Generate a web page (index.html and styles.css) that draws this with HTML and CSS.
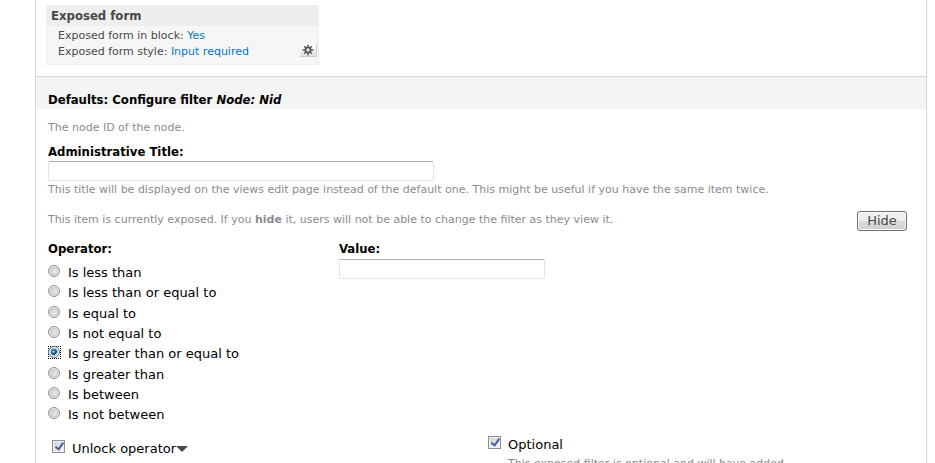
FILE: index.html
```html
<!DOCTYPE html>
<html lang="en">
<head>
    <meta charset="UTF-8">
    <meta name="viewport" content="width=device-width, initial-scale=1.0">
    <title>Configure filter</title>
    <link rel="stylesheet" href="styles.css">
</head>
<body>
    <div class="views-edit">
        <!-- Exposed form settings -->
        <div class="bucket">
            <h3 class="bucket-title">Exposed form</h3>
            <div class="bucket-body">
                <div class="setting">
                    <span>Exposed form in block: <a href="#">Yes</a></span>
                </div>
                <div class="setting">
                    <span>Exposed form style: <a href="#">Input required</a></span>
                    <button type="button" class="gear" aria-label="Settings">
                        <svg width="12" height="12" viewBox="0 0 12 12">
                            <g stroke="#555">
                                <path d="M6 0.5V11.5M0.5 6H11.5M2.2 2.2L9.8 9.8M9.8 2.2L2.2 9.8" stroke-width="1.4" />
                                <circle cx="6" cy="6" r="2.6" fill="#e8e8e8" stroke-width="1.8" />
                            </g>
                        </svg>
                    </button>
                </div>
            </div>
        </div>

        <!-- Filter form -->
        <form class="filter-form">
            <h2 class="form-title">Defaults: Configure filter <em>Node: Nid</em></h2>
            <div class="form-body">
                <p class="note">The node ID of the node.</p>

                <div class="form-item">
                    <label class="label" for="admin-title">Administrative Title:</label>
                    <input type="text" id="admin-title" class="text-box title-box">
                    <p class="description">This title will be displayed on the views edit page instead of the default one. This might be useful if you have the same item twice.</p>
                </div>

                <div class="exposed">
                    <p class="note">This item is currently exposed. If you <strong>hide</strong> it, users will not be able to change the filter as they view it.</p>
                    <button type="button" class="hide-button">Hide</button>
                </div>

                <div class="columns">
                    <fieldset class="operators">
                        <legend class="label">Operator:</legend>
                        <label class="option"><input type="radio" name="operator">Is less than</label>
                        <label class="option"><input type="radio" name="operator">Is less than or equal to</label>
                        <label class="option"><input type="radio" name="operator">Is equal to</label>
                        <label class="option"><input type="radio" name="operator">Is not equal to</label>
                        <label class="option"><input type="radio" name="operator" checked>Is greater than or equal to</label>
                        <label class="option"><input type="radio" name="operator">Is greater than</label>
                        <label class="option"><input type="radio" name="operator">Is between</label>
                        <label class="option"><input type="radio" name="operator">Is not between</label>
                    </fieldset>
                    <div class="value">
                        <label class="label" for="value">Value:</label>
                        <input type="text" id="value" class="text-box value-box">
                    </div>
                </div>

                <div class="checks">
                    <div class="check unlock">
                        <label class="check-label"><input type="checkbox" checked>Unlock operator<span class="arrow"></span></label>
                        <p class="note">When checked, the operator will be exposed to the user</p>
                    </div>
                    <div class="check optional">
                        <label class="check-label"><input type="checkbox" checked>Optional</label>
                        <p class="note">This exposed filter is optional and will have added</p>
                    </div>
                </div>
            </div>
        </form>
    </div>
</body>
</html>
```
FILE: styles.css
```css
html {
    overflow: hidden;
}
body {
    font-family: Verdana, "DejaVu Sans", sans-serif;
    font-size: 13px;
    line-height: 20px;
    margin: 0;
    color: #000;
    background-color: #fff;
}
h2, h3, p {
    margin: 0;
}
a {
    color: #0077cc;
    text-decoration: none;
}
.views-edit {
    margin: 0 8px 0 35px;
    padding-top: 5px;
    border-left: 1px solid #d3d7d9;
    border-right: 1px solid #d3d7d9;
}

/* settings bucket */
.bucket {
    box-sizing: border-box;
    width: 273px;
    margin: 0 0 11px 10px;
    border: 1px solid #eee;
    background-color: #f6f6f6;
    color: #484848;
    font-size: 11px;
}
.bucket-title {
    padding-left: 4px;
    background-color: #eee;
    font-family: "DejaVu Sans Condensed", "DejaVu Sans", sans-serif;
    font-size: 13px;
    line-height: 20px;
}
.bucket-body {
    padding: 2px 1px 4px 11px;
}
.setting {
    display: flex;
    justify-content: space-between;
    line-height: 16px;
}
.gear {
    display: flex;
    align-items: center;
    justify-content: center;
    width: 17px;
    height: 13px;
    padding: 0;
    border: 0;
    border-right: 1px solid #ccc;
    border-bottom: 1px solid #ccc;
    background: linear-gradient(#fff, #e2e2e2);
}

/* filter form */
.filter-form {
    border-top: 1px solid #d3d7d9;
}
.form-title {
    padding: 13px 12px 0;
    background-color: #f4f4f4;
    font-family: "DejaVu Sans Condensed", "DejaVu Sans", sans-serif;
    font-size: 13px;
    line-height: 19px;
}
.form-body {
    padding: 9px 19px 0 12px;
}
.note {
    color: #8b8b8b;
    font-size: 11px;
}
.label {
    display: block;
    padding: 0;
    font-family: "DejaVu Sans Condensed", "DejaVu Sans", sans-serif;
    font-weight: bold;
    line-height: 19px;
}
.form-item {
    padding-top: 4px;
}
.text-box {
    display: block;
    box-sizing: border-box;
    width: 100%;
    height: 20px;
    border: 1px solid #e3e3ec;
    border-top-color: #abadb3;
    border-radius: 2px;
    background-color: #fff;
}
.title-box {
    max-width: 386px;
}
.value-box {
    max-width: 206px;
    margin-top: 1px;
}
.description {
    color: #8b8b8b;
    font-size: 11px;
    line-height: 18px;
}
.exposed {
    display: flex;
    justify-content: space-between;
    padding-top: 11px;
}
.hide-button {
    width: 50px;
    height: 20px;
    margin-top: 1px;
    padding: 0;
    border: 1px solid #707070;
    border-radius: 3px;
    box-shadow: inset 0 0 0 1px #fafafa;
    background: linear-gradient(#f2f2f2 0, #ebebeb 50%, #ddd 50%, #cfcfcf 100%);
    color: #484848;
    font-family: inherit;
    font-size: 13px;
    line-height: 16px;
}
.columns {
    display: grid;
    grid-template-columns: 291px 1fr;
    padding-top: 8px;
}
.operators {
    margin: 0;
    padding: 0;
    border: 0;
}
.operators .label {
    margin-bottom: 5px;
}
.option {
    display: flex;
    gap: 8px;
}
.option:nth-of-type(3n+2) {
    margin-bottom: 1px;
}
input[type="radio"] {
    appearance: none;
    box-sizing: border-box;
    width: 12px;
    height: 12px;
    margin: 2px 0 0;
    border: 1px solid #8e8f8f;
    border-radius: 50%;
    box-shadow: inset 0 0 0 1px #f4f4f4, inset 0 0 0 2px #c4c8cc;
    background: linear-gradient(135deg, #c4c8cc, #f6f6f6);
}
input[type="radio"]:checked {
    border-color: #5c7a90;
    background: radial-gradient(circle at 45% 45%, #a8e4fa 0, #1c7fb0 20%, #0b3550 40%, #dfe8ee 48%);
}
/* square focus ring round the chosen option */
.option:has(:checked)::before {
    content: "";
    box-sizing: border-box;
    width: 13px;
    height: 13px;
    margin: 2px -21px 0 0;
    border: 1px dotted #000;
}
.checks {
    display: grid;
    grid-template-columns: 440px 1fr;
    padding-top: 9px;
}
.checks .note {
    line-height: 18px;
}
.check-label {
    display: flex;
    align-items: flex-start;
    gap: 7px;
}
input[type="checkbox"] {
    appearance: none;
    box-sizing: border-box;
    width: 13px;
    height: 13px;
    margin: 1px 0 0;
    border: 1px solid #8e8f8f;
    background: linear-gradient(135deg, #cbcfd5, #f6f6f6);
    box-shadow: inset 0 0 0 1px #f4f4f4;
}
input[type="checkbox"]::before {
    content: "";
    display: block;
    width: 3px;
    height: 7px;
    margin: 0 0 0 4px;
    border: solid #4a5f97;
    border-width: 0 2px 2px 0;
    transform: rotate(35deg);
}
.unlock {
    padding-top: 4px;
}
.unlock .check-label {
    padding-left: 4px;
}
.optional .note {
    padding-left: 20px;
}
.arrow {
    margin: 7px 0 0 -7px;
    border: 6px solid transparent;
    border-top-color: #484848;
    border-bottom: 0;
}
```
